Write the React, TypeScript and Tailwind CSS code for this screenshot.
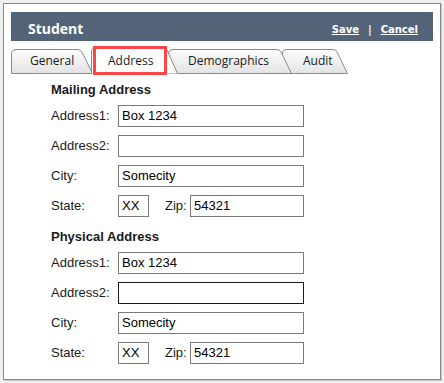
import type { ReactNode } from 'react'

const tabs = [
  { label: 'General', width: 82, pad: 19, overlap: 0, z: 'z-30', active: false },
  { label: 'Address', width: 87, pad: 17, overlap: -2, z: 'z-40', active: true },
  { label: 'Demographics', width: 124, pad: 20, overlap: -10, z: 'z-20', active: false },
  { label: 'Audit', width: 66, pad: 21, overlap: -10, z: 'z-10', active: false },
]

const H = 28

function tabPath(w: number, top: number) {
  return `M0.5,${H - 0.5} L0.5,${top + 5} Q0.5,${top + 0.5} 5,${top + 0.5} L${w - 16},${top + 0.5} Q${w - 12},${top + 0.5} ${w - 11},${top + 3} L${w - 0.5},${H - 0.5}`
}

function Tab({ tab }: { tab: (typeof tabs)[number] }) {
  const top = tab.active ? 1 : 3
  return (
    <div
      className={`relative h-[28px] shrink-0 ${tab.z}`}
      style={{ width: tab.width, marginLeft: tab.overlap }}
    >
      <svg className="absolute inset-0" width={tab.width} height={H}>
        <defs>
          <linearGradient id="tabfill" x1="0" y1="0" x2="0" y2="1">
            <stop offset="0" stopColor="#fdfdfd" />
            <stop offset="1" stopColor="#e3e3e3" />
          </linearGradient>
        </defs>
        {tab.active ? (
          <path d={tabPath(tab.width, top)} fill="#ffffff" stroke="#8a8a8a" />
        ) : (
          <path d={tabPath(tab.width, top) + ' Z'} fill="url(#tabfill)" stroke="#8a8a8a" />
        )}
      </svg>
      <span
        className="relative block pt-[7px] text-[12px] leading-[16px] text-[#1a1a1a] font-['Open_Sans',sans-serif]"
        style={{ paddingLeft: tab.pad }}
      >
        {tab.label}
      </span>
      {tab.active && (
        <div className="absolute left-[2px] top-0 h-[29px] w-[74px] border-[3px] border-[#ff4646]" />
      )}
    </div>
  )
}

function Field({ value = '', focused = false, width = 186 }: { value?: string; focused?: boolean; width?: number }) {
  return (
    <div
      className={`flex h-[22px] items-center border px-[3px] text-[13px] text-black ${
        focused ? 'border-[#1a1a1a]' : 'border-[#7a7a7a]'
      }`}
      style={{ width }}
    >
      {value}
    </div>
  )
}

function Row({ label, children }: { label: string; children: ReactNode }) {
  return (
    <div className="flex h-[22px] items-center">
      <span className="w-[67px] shrink-0 text-[13px] text-[#1a1a1a]">{label}</span>
      {children}
    </div>
  )
}

function AddressBlock({ title, focusedSecond = false }: { title: string; focusedSecond?: boolean }) {
  return (
    <div className="flex flex-col">
      <h3 className="mb-[8px] text-[13px] font-bold leading-[15px] text-[#1a1a1a]">{title}</h3>
      <div className="flex flex-col gap-[8px]">
        <Row label="Address1:">
          <Field value="Box 1234" />
        </Row>
        <Row label="Address2:">
          <Field focused={focusedSecond} />
        </Row>
        <Row label="City:">
          <Field value="Somecity" />
        </Row>
        <Row label="State:">
          <Field value="XX" width={31} />
          <span className="ml-[16px] w-[25px] text-[13px] text-[#1a1a1a]">Zip:</span>
          <Field value="54321" width={114} />
        </Row>
      </div>
    </div>
  )
}

export default function App() {
  return (
    <div className="h-[383px] w-[444px] bg-[#f0f0f0] pl-[3px] pt-[3px] font-['Liberation_Sans',Arial,sans-serif]">
      <div className="h-[377px] w-[438px] border border-[#8a8a8a] bg-white shadow-[1px_1px_0_#c8c8c8]">
        {/* Title bar */}
        <div className="mx-[7px] mt-[8px] flex h-[29px] items-start justify-between bg-[#536478] pl-[17px] pr-[15px] text-white">
          <span className="pt-[7px] text-[14px] font-bold leading-[19px] font-['Open_Sans',sans-serif]">Student</span>
          <div className="flex items-center gap-[9px] pt-[11px] text-[10px] font-bold leading-[14px] font-['DejaVu_Sans',sans-serif]">
            <span className="underline">Save</span>
            <span>|</span>
            <span className="underline">Cancel</span>
          </div>
        </div>

        {/* Tabs */}
        <div className="ml-[7px] mt-[5px] flex">
          {tabs.map((tab) => (
            <Tab key={tab.label} tab={tab} />
          ))}
        </div>

        {/* Form */}
        <div className="mt-[8px] flex flex-col gap-[12px] pl-[47px]">
          <AddressBlock title="Mailing Address" />
          <AddressBlock title="Physical Address" focusedSecond />
        </div>
      </div>
    </div>
  )
}
